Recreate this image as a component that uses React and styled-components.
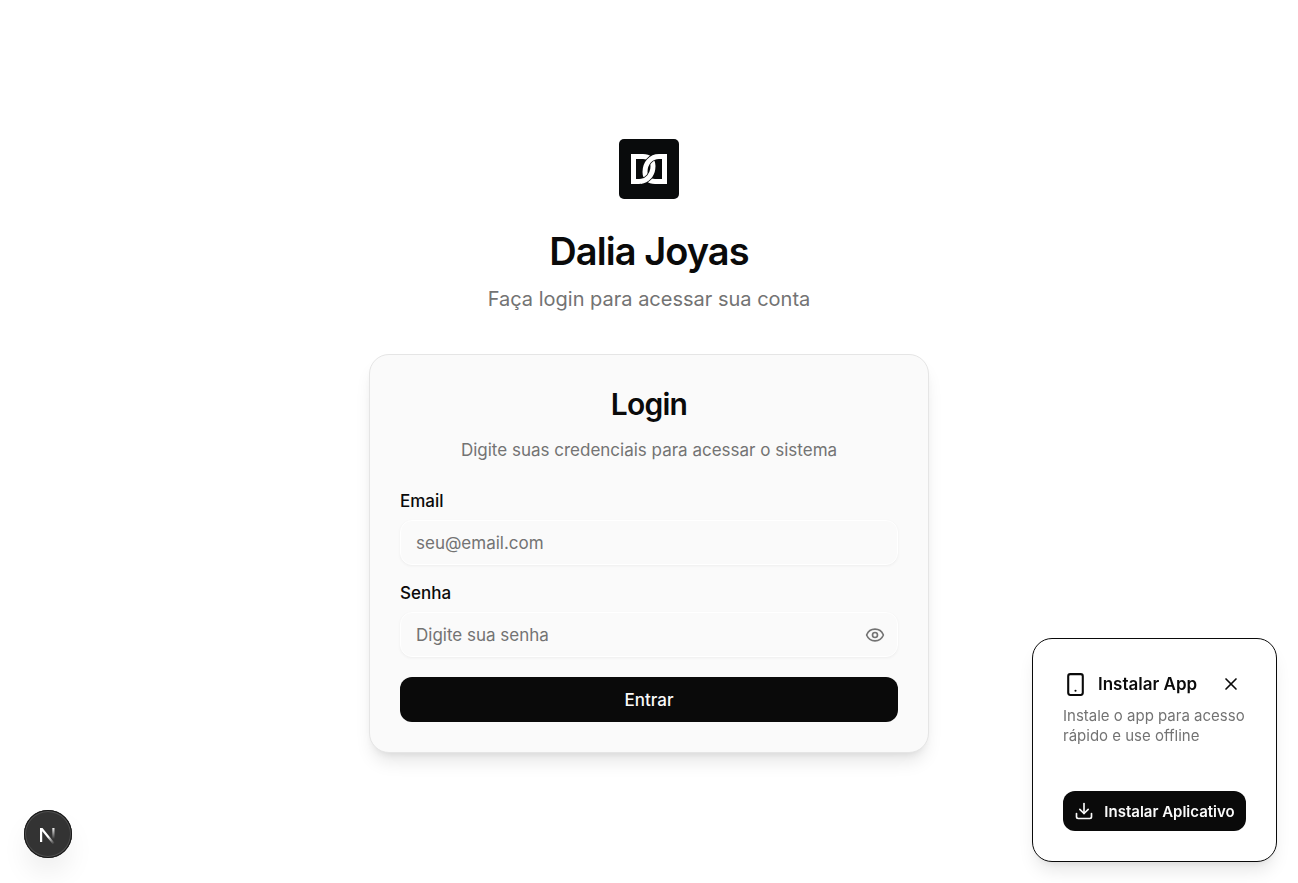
import React, { useState } from "react";
import styled, { createGlobalStyle, css } from "styled-components";
import { Download, Eye, EyeOff, Smartphone, X } from "lucide-react";

const GlobalStyle = createGlobalStyle`
  *, *::before, *::after { box-sizing: border-box; }
  body {
    margin: 0;
    background: #ffffff;
    color: #0a0a0a;
    font-family: Inter, "Liberation Sans", sans-serif;
    font-size: 17px;
  }
  h1, h2, p { margin: 0; }
  button, input { font-family: inherit; }
`;

const Page = styled.main`
  min-height: 100vh;
  display: flex;
  flex-direction: column;
  align-items: center;
  justify-content: center;
  padding: 28px 20px 20px;
`;

const Brand = styled.header`
  display: flex;
  flex-direction: column;
  align-items: center;
  margin-bottom: 40px;
  text-align: center;
`;

const Logo = styled.svg`
  width: 60px;
  height: 60px;
  margin-bottom: 30px;
`;

const BrandName = styled.h1`
  font-size: 38px;
  font-weight: 600;
  line-height: 45px;
  letter-spacing: -0.025em;
`;

const Tagline = styled.p`
  margin-top: 10px;
  font-size: 20px;
  line-height: 30px;
  color: #737373;
`;

const LoginCard = styled.section`
  width: 100%;
  max-width: 560px;
  padding: 30px;
  border: 1px solid #e5e5e5;
  border-radius: 20px;
  background: #fafafa;
  box-shadow: 0 12px 18px -4px rgba(0, 0, 0, 0.1), 0 5px 8px -5px rgba(0, 0, 0, 0.1);
`;

const CardHeader = styled.div`
  margin-bottom: 30px;
  text-align: center;
`;

const CardTitle = styled.h2`
  font-size: 30px;
  font-weight: 600;
  line-height: 38px;
  letter-spacing: -0.025em;
`;

const CardText = styled.p`
  margin-top: 14px;
  font-size: 17px;
  line-height: 26px;
  color: #737373;
`;

const Form = styled.form`
  display: flex;
  flex-direction: column;
  gap: 20px;
`;

const Field = styled.div`
  display: flex;
  flex-direction: column;
  gap: 10px;
`;

const Label = styled.label`
  font-size: 17px;
  font-weight: 500;
  line-height: 17px;
`;

const InputWrap = styled.div`
  position: relative;
  display: flex;
`;

const Input = styled.input`
  width: 100%;
  height: 45px;
  padding: 2px ${(p) => (p.$withAction ? 50 : 15)}px 0 15px;
  border: 1px solid #ffffff;
  border-radius: 12px;
  outline: none;
  background: #fafafa;
  color: #0a0a0a;
  font-size: 17px;
  box-shadow: 0 1px 3px rgba(0, 0, 0, 0.05);
  &::placeholder { color: #737373; opacity: 1; }
`;

const plainButton = css`
  display: flex;
  align-items: center;
  justify-content: center;
  padding: 0;
  border: 0;
  background: transparent;
  cursor: pointer;
`;

const RevealButton = styled.button`
  ${plainButton}
  position: absolute;
  top: 0;
  right: 0;
  width: 46px;
  height: 100%;
  padding-top: 1px;
  color: #737373;
`;

const PrimaryButton = styled.button`
  ${plainButton}
  gap: 10px;
  width: 100%;
  height: ${(p) => (p.$compact ? 40 : 45)}px;
  padding-top: ${(p) => (p.$compact ? 0 : 1)}px;
  border-radius: 12px;
  background: #0a0a0a;
  color: #fafafa;
  font-size: ${(p) => (p.$compact ? 15 : 17)}px;
  font-weight: ${(p) => (p.$compact ? 600 : 500)};
  white-space: nowrap;
`;

const InstallCard = styled.aside`
  position: fixed;
  right: 21px;
  bottom: 21px;
  width: 245px;
  padding: 30px;
  border: 1px solid #0a0a0a;
  border-radius: 20px;
  background: #ffffff;
  box-shadow: 0 12px 18px -4px rgba(0, 0, 0, 0.1), 0 5px 8px -5px rgba(0, 0, 0, 0.1);
`;

const InstallHeader = styled.div`
  display: flex;
  align-items: center;
  height: 30px;
`;

const InstallTitle = styled.h2`
  flex: 1;
  margin-left: 10px;
  font-size: 17px;
  font-weight: 600;
  line-height: 30px;
`;

const CloseButton = styled.button`
  ${plainButton}
  width: 30px;
  height: 30px;
  color: #0a0a0a;
`;

const InstallText = styled.p`
  margin: 7px 0 45px;
  font-size: 15px;
  line-height: 20px;
  color: #737373;
`;

const DevBadge = styled.button`
  ${plainButton}
  position: fixed;
  left: 24px;
  bottom: 25px;
  width: 48px;
  height: 48px;
  border-radius: 50%;
  background: #333333;
  box-shadow: inset 0 0 0 1px #171717, inset 0 0 0 2px #4f4f4f,
    0 16px 32px -8px rgba(0, 0, 0, 0.14);
`;

const LEFT_D = "M14.500 17.500H24C30 17.500 34 21 34 27C34 36 28 42.500 20 42.500H14.500Z";
const RIGHT_D = "M45.500 42.500H36C30 42.500 26 39 26 33C26 24 32 17.500 40 17.500H45.500Z";

function DaliaLogo() {
  return (
    <Logo viewBox="0 0 60 60" role="img" aria-label="Dalia Joyas">
      <defs>
        <clipPath id="lower-crossing">
          <rect x="22" y="30" width="26" height="20" />
        </clipPath>
      </defs>
      <rect width="60" height="60" rx="5" fill="#090b0c" />
      <g fill="none" stroke="#fff" strokeWidth="5">
        <path d={LEFT_D} />
        <path d={RIGHT_D} stroke="#090b0c" strokeWidth="6.600" />
        <path d={RIGHT_D} />
        <g clipPath="url(#lower-crossing)">
          <path d={LEFT_D} stroke="#090b0c" strokeWidth="6.600" />
          <path d={LEFT_D} />
        </g>
      </g>
    </Logo>
  );
}

function NextMark() {
  return (
    <svg width="20" height="20" viewBox="0 0 20 20" aria-hidden="true">
      <defs>
        <linearGradient id="n-leg" x1="11" y1="12" x2="17" y2="19" gradientUnits="userSpaceOnUse">
          <stop stopColor="#fff" />
          <stop offset="1" stopColor="#fff" stopOpacity="0" />
        </linearGradient>
        <linearGradient id="n-bar" x1="0" y1="3" x2="0" y2="15" gradientUnits="userSpaceOnUse">
          <stop stopColor="#fff" />
          <stop offset="1" stopColor="#fff" stopOpacity="0" />
        </linearGradient>
      </defs>
      <path d="M2 4H4.500L17 19.500L15 20.500L4.200 7.200V18H2Z" fill="url(#n-leg)" />
      <path d="M14.300 4H16.500V15H14.300Z" fill="url(#n-bar)" />
    </svg>
  );
}

export default function App() {
  const [visible, setVisible] = useState(false);
  const [installOpen, setInstallOpen] = useState(true);

  return (
    <>
      <GlobalStyle />
      <Page>
        <Brand>
          <DaliaLogo />
          <BrandName>Dalia Joyas</BrandName>
          <Tagline>Faça login para acessar sua conta</Tagline>
        </Brand>
        <LoginCard>
          <CardHeader>
            <CardTitle>Login</CardTitle>
            <CardText>Digite suas credenciais para acessar o sistema</CardText>
          </CardHeader>
          <Form onSubmit={(e) => e.preventDefault()}>
            <Field>
              <Label htmlFor="email">Email</Label>
              <Input id="email" type="email" placeholder="seu@email.com" />
            </Field>
            <Field>
              <Label htmlFor="senha">Senha</Label>
              <InputWrap>
                <Input
                  id="senha"
                  type={visible ? "text" : "password"}
                  placeholder="Digite sua senha"
                  $withAction
                />
                <RevealButton type="button" aria-label="Mostrar senha" onClick={() => setVisible(!visible)}>
                  {visible ? <EyeOff size={20} /> : <Eye size={20} />}
                </RevealButton>
              </InputWrap>
            </Field>
            <PrimaryButton type="submit">Entrar</PrimaryButton>
          </Form>
        </LoginCard>
      </Page>
      {installOpen && (
        <InstallCard>
          <InstallHeader>
            <Smartphone size={25} />
            <InstallTitle>Instalar App</InstallTitle>
            <CloseButton type="button" aria-label="Fechar" onClick={() => setInstallOpen(false)}>
              <X size={20} />
            </CloseButton>
          </InstallHeader>
          <InstallText>Instale o app para acesso rápido e use offline</InstallText>
          <PrimaryButton type="button" $compact>
            <Download size={20} />
            Instalar Aplicativo
          </PrimaryButton>
        </InstallCard>
      )}
      <DevBadge type="button" aria-label="Next.js">
        <NextMark />
      </DevBadge>
    </>
  );
}
